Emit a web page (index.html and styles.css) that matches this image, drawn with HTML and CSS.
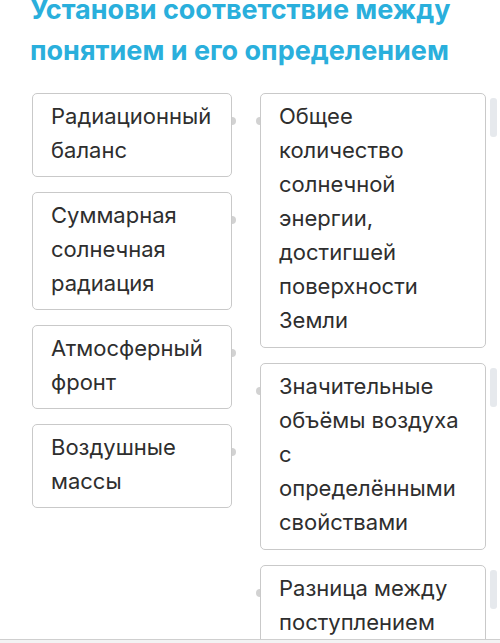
FILE: index.html
```html
<!DOCTYPE html>
<html lang="ru">
<head>
    <meta charset="UTF-8">
    <meta name="viewport" content="width=device-width, initial-scale=1.0">
    <title>Соответствие</title>
    <link rel="stylesheet" href="styles.css">
</head>
<body>
    <!-- Task title -->
    <h1 class="task-title">Установи соответствие между понятием и его определением</h1>

    <!-- Matching board -->
    <div class="match-board">
        <div class="terms">
            <div class="term">Радиационный баланс</div>
            <div class="term">Суммарная солнечная радиация</div>
            <div class="term">Атмосферный фронт</div>
            <div class="term">Воздушные массы</div>
        </div>

        <div class="definitions">
            <div class="def-row">
                <div class="definition">Общее количество солнечной энергии, достигшей поверхности Земли</div>
                <div class="handle"></div>
            </div>
            <div class="def-row">
                <div class="definition">Значительные объёмы воздуха с определёнными свойствами</div>
                <div class="handle"></div>
            </div>
            <div class="def-row">
                <div class="definition">Разница между поступлением солнечной радиации и её расходом</div>
                <div class="handle"></div>
            </div>
        </div>
    </div>

    <!-- Bottom bar -->
    <div class="bottom-bar"></div>
</body>
</html>
```

FILE: styles.css
```css
body {
    background-color: #ffffff;
    color: #2e2e2e;
    font-family: Inter, "Noto Sans", sans-serif;
    margin: 0;
    padding: 0;
    overflow: hidden;
}

.task-title {
    margin: -11px 0 0;
    padding: 0 40px 0 30px;
    font-size: 27px;
    line-height: 41px;
    font-weight: 700;
    color: #2aafdc; /* quiz blue */
}

.match-board {
    display: flex;
    gap: 28px;
    margin: 22px 0 0 32px;
}

.terms {
    width: 200px;
    display: flex;
    flex-direction: column;
    gap: 15px;
}

.definitions {
    display: flex;
    flex-direction: column;
    gap: 15px;
}

.term,
.definition {
    position: relative;
    background-color: #ffffff;
    border: 1px solid #c9c9c9;
    border-radius: 5px;
    font-size: 22px;
    line-height: 34px;
    padding: 5px 6px 9px 18px;
}

.definition {
    width: 182px;
    padding-right: 24px;
    padding-bottom: 10px;
}

/* connector dots */
.term::after,
.definition::before {
    content: "";
    position: absolute;
    top: 23px;
    width: 4px;
    height: 8px;
    background-color: #d2d2d2;
}

.term::after {
    right: -5px;
    border-radius: 0 4px 4px 0;
}

.definition::before {
    left: -5px;
    border-radius: 4px 0 0 4px;
}

.def-row {
    display: flex;
    gap: 4px;
}

.handle {
    width: 7px;
    height: 39px;
    margin-top: 5px;
    border-radius: 3px;
    background-color: #e6e9ed;
}

.bottom-bar {
    position: fixed;
    left: 0;
    bottom: 0;
    width: 100%;
    height: 3px;
    border-top: 1px solid #cfcfcf;
    background-color: #f3f3f3;
}
```
